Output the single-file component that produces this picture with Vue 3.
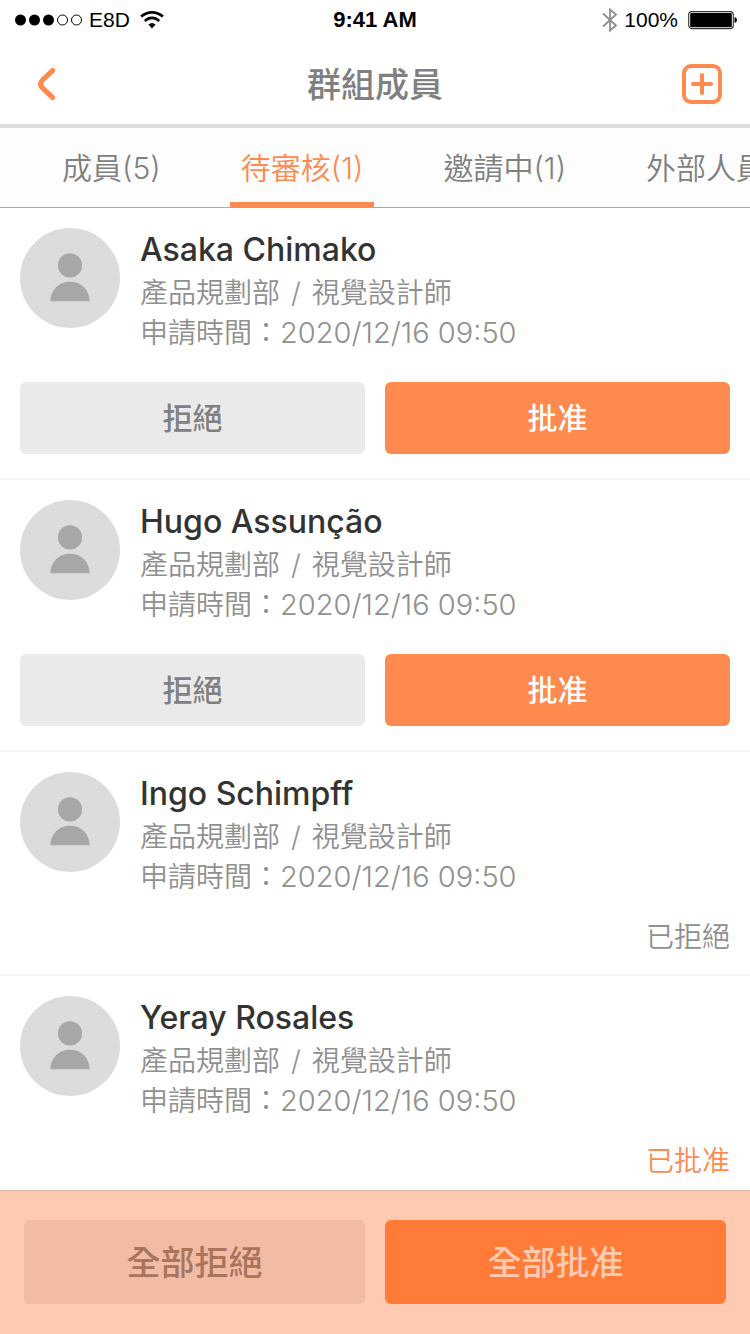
<script setup>
import { ref } from 'vue'

const tabs = ['成員(5)', '待審核(1)', '邀請中(1)', '外部人員(1)']
const activeTab = ref(1)

const applicants = ref([
  { name: 'Asaka Chimako', status: 'pending' },
  { name: 'Hugo Assunção', status: 'pending' },
  { name: 'Ingo Schimpff', status: 'rejected' },
  { name: 'Yeray Rosales', status: 'approved' },
])

const statusLabels = { rejected: '已拒絕', approved: '已批准' }

function resolveAll(status) {
  for (const person of applicants.value) {
    if (person.status === 'pending') person.status = status
  }
}
</script>

<template>
  <div class="screen">
    <div class="status-bar">
      <div class="status-left">
        <svg width="71" height="14" viewBox="0 0 71 14" aria-hidden="true">
          <circle cx="7.5" cy="7" r="5.5" />
          <circle cx="21.5" cy="7" r="5.5" />
          <circle cx="35.5" cy="7" r="5.5" />
          <circle cx="49.5" cy="7" r="5" fill="none" stroke="#000" />
          <circle cx="63.5" cy="7" r="5" fill="none" stroke="#000" />
        </svg>
        <span class="carrier">E8D</span>
        <svg class="wifi" width="24" height="18" viewBox="0 0 24 18" aria-hidden="true">
          <g fill="none" stroke="#0b0204" stroke-width="2.6">
            <path d="M1 5.6 Q6 1.4 12 1.4 T23 5.6" />
            <path d="M4.8 10 Q8 6.9 12 6.9 T19.2 10" />
          </g>
          <path d="M8.4 13.6 Q12 10.6 15.6 13.6 L12 17.6Z" fill="#0b0204" />
        </svg>
      </div>
      <span class="clock">9:41 AM</span>
      <div class="status-right">
        <svg width="16" height="26" viewBox="0 0 16 26" fill="none" stroke="#8e8e8e" stroke-width="1.8" aria-hidden="true">
          <path d="M1 6.5 14 18.5 8 23.5V2.5L14 7.5 1 19.5" />
        </svg>
        <span>100%</span>
        <svg class="battery" width="49" height="20" viewBox="0 0 49 20" aria-hidden="true">
          <rect x="0.7" y="1.6" width="44.6" height="17" rx="3" fill="none" stroke="#333" stroke-width="1.1" />
          <rect x="2.2" y="3" width="41.6" height="14.2" rx="1" />
          <path d="M46.5 7Q49 7.6 49 10T46.5 13Z" />
        </svg>
      </div>
    </div>

    <header class="nav-bar">
      <button class="icon-button" type="button" aria-label="返回">
        <svg width="40" height="40" viewBox="0 0 40 40" fill="none" stroke="#ff8a4f" stroke-width="5" stroke-linecap="round">
          <path d="M24.7 6.4 14.2 16.4Q10.7 20 14.2 23.6L24.7 33.6" />
        </svg>
      </button>
      <h1>群組成員</h1>
      <button class="icon-button" type="button" aria-label="新增成員">
        <svg width="40" height="40" viewBox="0 0 40 40" fill="none" stroke="#ff8a4f" stroke-width="4">
          <rect x="2" y="2" width="36" height="36" rx="7" />
          <path d="M20 11V29M11 20H29" stroke-linecap="round" />
        </svg>
      </button>
    </header>

    <nav class="tabs">
      <button
        v-for="(tab, index) in tabs"
        :key="tab"
        type="button"
        class="tab"
        :class="{ active: index === activeTab }"
        @click="activeTab = index"
      >{{ tab }}</button>
    </nav>

    <ul class="list">
      <li v-for="person in applicants" :key="person.name" class="card">
        <div class="profile">
          <svg class="avatar" width="100" height="100" viewBox="0 0 100 100" aria-hidden="true">
            <circle cx="50" cy="50" r="50" fill="#dcdcdc" />
            <circle cx="50" cy="37.4" r="12.1" fill="#a7a7a7" />
            <path d="M30.3 73.3A19.7 19.7 0 0 1 69.7 73.3Z" fill="#a7a7a7" />
          </svg>
          <div class="details">
            <h2>{{ person.name }}</h2>
            <p>產品規劃部<span class="divider">/</span>視覺設計師</p>
            <p>申請時間：<time datetime="2020-12-16T09:50">2020/12/16 09:50</time></p>
          </div>
        </div>
        <div v-if="person.status === 'pending'" class="actions">
          <button type="button" class="reject" @click="person.status = 'rejected'">拒絕</button>
          <button type="button" class="approve" @click="person.status = 'approved'">批准</button>
        </div>
        <p v-else class="result" :class="person.status">{{ statusLabels[person.status] }}</p>
      </li>
    </ul>

    <footer class="bulk">
      <button type="button" class="reject-all" @click="resolveAll('rejected')">全部拒絕</button>
      <button type="button" class="approve-all" @click="resolveAll('approved')">全部批准</button>
    </footer>
  </div>
</template>

<style>
body {
  margin: 0;
  background: #fff;
}
</style>

<style scoped>
.screen {
  display: flex;
  flex-direction: column;
  height: 100vh;
  background: #fff;
  color: #808080;
  font-family: Inter, "Noto Sans CJK TC", sans-serif;
}

h1,
h2,
p,
ul {
  margin: 0;
  padding: 0;
}

button {
  border: 0;
  padding: 0;
  background: none;
  color: inherit;
  font: inherit;
  cursor: pointer;
}

svg {
  display: block;
  flex: none;
}

.status-bar {
  flex: none;
  display: grid;
  grid-template-columns: 1fr auto 1fr;
  align-items: center;
  height: 40px;
  padding: 0 13px;
  color: #000;
  font-family: "Liberation Sans", sans-serif;
  font-size: 21px;
}

.status-left,
.status-right {
  display: flex;
  align-items: center;
}

.status-right {
  justify-content: flex-end;
}

.carrier {
  margin-left: 5px;
}

.wifi {
  margin-left: 10px;
}

.clock {
  font-size: 22px;
  font-weight: 700;
}

.status-right span {
  margin-left: 6px;
}

.battery {
  margin-left: 10px;
}

.nav-bar {
  flex: none;
  display: flex;
  align-items: center;
  justify-content: space-between;
  height: 88px;
  padding: 0 28px;
  box-sizing: border-box;
  border-bottom: 4px solid #dcdcdc;
}

.icon-button {
  padding-top: 4px;
}

.nav-bar h1 {
  font-size: 34px;
  font-weight: 500;
}

.tabs {
  flex: none;
  display: flex;
  gap: 58px;
  height: 80px;
  padding-left: 51px;
  box-sizing: border-box;
  background: linear-gradient(#acacac, #acacac) bottom / 100% 1px no-repeat #fdfdfd;
  overflow: hidden;
}

.tab {
  flex: none;
  padding: 0 11px;
  border-top: 2px solid transparent;
  border-bottom: 6px solid transparent;
  font-size: 30px;
  font-weight: 350;
  white-space: nowrap;
}

.tab.active {
  border-bottom-color: #ff8a4f;
  color: #ff8a4f;
}

.list {
  flex: 1;
  min-height: 0;
  overflow-y: auto;
  scrollbar-width: none;
  list-style: none;
}

.card {
  padding: 20px 20px 0;
  border-bottom: 2px solid #f4f4f4;
}

.profile {
  display: flex;
  gap: 20px;
}

.details {
  min-width: 0;
}

.details h2 {
  margin-bottom: 1px;
  color: #333;
  font-size: 32px;
  font-weight: 500;
  line-height: 44px;
}

.details p,
.result {
  color: #909090;
  font-size: 28px;
  font-weight: 350;
  line-height: 40px;
}

.details time {
  font-size: 29px;
  line-height: 1;
}

.divider {
  margin: 0 11px;
}

.actions {
  display: flex;
  gap: 20px;
  padding: 29px 0 24px;
}

.actions button {
  flex: 1;
  height: 72px;
  padding-bottom: 4px;
  border-radius: 6px;
  font-size: 30px;
  font-weight: 500;
}

.reject {
  background: #eaeaea;
}

.actions .approve {
  background: #ff8a4f;
  color: #fff;
}

.result {
  padding: 20px 0 17px;
  text-align: right;
}

.result.approved {
  color: #ff8a4f;
}

.bulk {
  flex: none;
  display: flex;
  gap: 20px;
  padding: 29px 24px 30px;
  border-top: 1px solid #e3b09a;
  background: #ffcab2;
}

.bulk button {
  flex: 1;
  height: 84px;
  padding-bottom: 3px;
  border-radius: 6px;
  font-size: 34px;
  font-weight: 500;
}

.bulk .reject-all {
  background: #f1bba4;
  color: #a8745c;
}

.bulk .approve-all {
  background: #ff7b37;
  color: #ffcab2;
}
</style>
